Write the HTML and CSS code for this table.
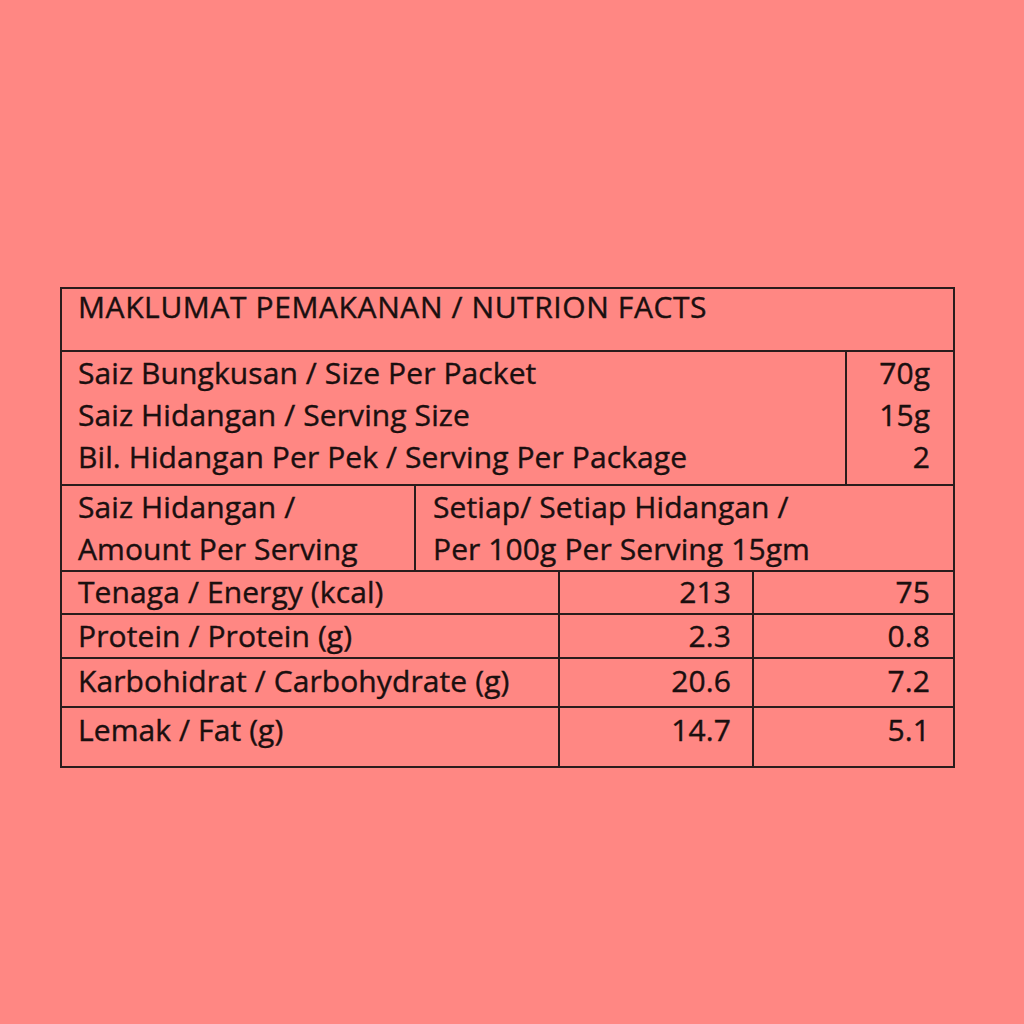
FILE: index.html
```html
<!DOCTYPE html>
<html>
<head>
<meta charset="utf-8">
<link rel="stylesheet" href="styles.css">
</head>
<body>
<table class="facts">
  <colgroup>
    <col class="c1"><col class="c2"><col class="c3"><col class="c4"><col class="c5">
  </colgroup>
  <tr class="r-title"><td colspan="5">MAKLUMAT PEMAKANAN / NUTRION FACTS</td></tr>
  <tr class="r-size">
    <td colspan="4">Saiz Bungkusan / Size Per Packet<br>Saiz Hidangan / Serving Size<br>Bil. Hidangan Per Pek / Serving Per Package</td>
    <td class="num last">70g<br>15g<br>2</td>
  </tr>
  <tr class="r-head">
    <td>Saiz Hidangan /<br>Amount Per Serving</td>
    <td colspan="4" class="sub">Setiap/ Setiap Hidangan /<br>Per 100g Per Serving 15gm</td>
  </tr>
  <tr class="r-a"><td colspan="2">Tenaga / Energy (kcal)</td><td class="num">213</td><td colspan="2" class="num last">75</td></tr>
  <tr class="r-b"><td colspan="2">Protein / Protein (g)</td><td class="num">2.3</td><td colspan="2" class="num last">0.8</td></tr>
  <tr class="r-c"><td colspan="2">Karbohidrat / Carbohydrate (g)</td><td class="num">20.6</td><td colspan="2" class="num last">7.2</td></tr>
  <tr class="r-d"><td colspan="2">Lemak / Fat (g)</td><td class="num">14.7</td><td colspan="2" class="num last">5.1</td></tr>
</table>
</body>
</html>
```

FILE: styles.css
```css
html, body {
  margin: 0;
  padding: 0;
  background: #ff8783;
}
body {
  padding-top: 287px;
  padding-left: 60px;
  font-family: "Open Sans", "Liberation Sans", sans-serif;
  color: #1a0f0f;
}
.facts {
  border-collapse: collapse;
  table-layout: fixed;
  width: 893px;
  font-size: 30px;
  line-height: 42px;
}
.c1 { width: 354px; }
.c2 { width: 144px; }
.c3 { width: 194px; }
.c4 { width: 93px; }
.c5 { width: 108px; }
.facts td {
  border: 2px solid #2a1c1c;
  vertical-align: top;
  padding: 0 21px 0 16px;
  white-space: nowrap;
  box-sizing: border-box;
  letter-spacing: 0.1px;
  -webkit-text-stroke: 0.4px currentColor;
}
.facts td.num { text-align: right; }
.facts td.last { padding-right: 23px; }
.facts td.sub { padding-left: 17px; }
.r-title { height: 63px; }
.r-title td { line-height: 36px; letter-spacing: 0.6px; }
.r-size { height: 134px; }
.r-head { height: 86px; }
.r-a { height: 43px; }
.r-b { height: 44px; }
.r-c { height: 49px; }
.r-d { height: 60px; }
.r-a td, .r-b td, .r-c td, .r-d td { line-height: 36px; }
.r-a td { padding-top: 2px; }
.r-b td { padding-top: 3px; }
.r-c td { padding-top: 4px; }
.r-d td { padding-top: 4px; }
```
